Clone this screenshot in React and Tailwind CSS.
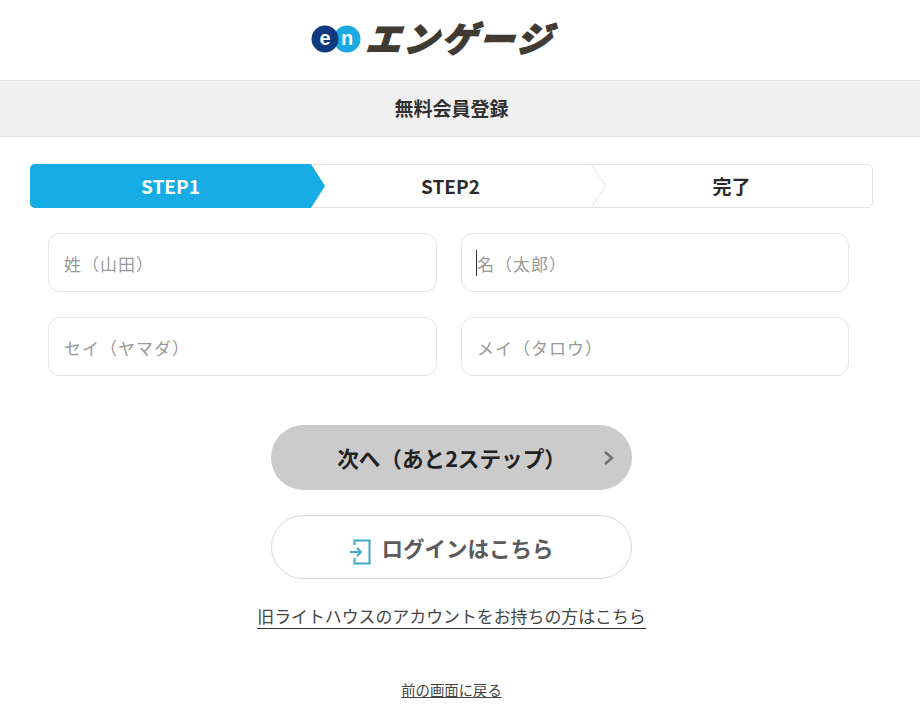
import React from "react";

const font = { jp: "font-['Noto_Sans_CJK_JP','Noto_Sans',sans-serif]" };

const Field = ({ placeholder, caret }) => (
  <div className="relative">
    <input
      type="text"
      placeholder={placeholder}
      className="w-full h-[59px] border border-[#e4e4e4] rounded-[12px] bg-white px-[15px] pt-[2px] text-[17px] tracking-[1px] text-[#333] placeholder:text-[#999] focus:outline-none"
    />
    {caret && <span className="absolute left-[15px] top-[17px] w-px h-[26px] bg-[#333]" />}
  </div>
);

const Logo = () => (
  <div className="flex items-center">
    <svg className="-mt-[2px]" width="50" height="28" viewBox="0 0 50 28">
      <circle cx="36" cy="14" r="13.5" fill="#1aa9e0" />
      <circle cx="14" cy="14" r="13.5" fill="#0f3a80" />
      <text x="14" y="20" textAnchor="middle" fontSize="20" fontWeight="700" fill="#fff" fontFamily="'Liberation Sans',sans-serif">e</text>
      <text x="36" y="20" textAnchor="middle" fontSize="20" fontWeight="700" fill="#fff" fontFamily="'Liberation Sans',sans-serif">n</text>
    </svg>
    <span className="ml-[9px] -mt-[7px] text-[35px] leading-none font-black text-[#3f3b33] tracking-[2.8px] -skew-x-[18deg] [-webkit-text-stroke:1.2px_#3f3b33] whitespace-nowrap">
      エンゲージ
    </span>
  </div>
);

const Steps = () => (
  <div className="relative mx-[30px] w-[843px] h-[44px] flex border border-[#e2e2e2] rounded-[5px] text-[19px] font-bold text-[#2b2b2b]">
    <div className="relative w-[281px] -m-px h-[44px] flex items-center justify-center bg-[#17ade4] rounded-l-[5px] text-white">
      STEP1
      <svg className="absolute left-full top-0" width="14" height="44" viewBox="0 0 14 44">
        <path d="M0 0 L14 22 L0 44 Z" fill="#17ade4" />
      </svg>
    </div>
    <div className="relative w-[281px] flex items-center justify-center">
      STEP2
      <svg className="absolute left-full -top-px" width="15" height="44" viewBox="0 0 15 44">
        <path d="M0 0 L15 22 L0 44" fill="#fff" stroke="#e2e2e2" />
      </svg>
    </div>
    <div className="w-[281px] flex items-center justify-center">完了</div>
  </div>
);

export default function App() {
  return (
    <div className={`w-[920px] min-h-[718px] bg-white ${font.jp}`}>
      <header className="h-[80px] flex items-center justify-center pr-[50px]">
        <Logo />
      </header>
      <div className="h-[57px] flex items-center justify-center pr-[17px] bg-[#f0f0f0] border-y border-[#e0e0e0] text-[19px] font-bold text-[#2f2f2f]">
        無料会員登録
      </div>

      <div className="pt-[27px]">
        <Steps />
      </div>

      <form className="mt-[25px] ml-[48px] grid grid-cols-[389px_388px] gap-x-[24px] gap-y-[25px]">
        <Field placeholder="姓（山田）" />
        <Field placeholder="名（太郎）" caret />
        <Field placeholder="セイ（ヤマダ）" />
        <Field placeholder="メイ（タロウ）" />
      </form>

      <div className="w-[903px] mt-[49px] flex flex-col items-center">
        <button
          type="button"
          className="relative w-[361px] h-[65px] rounded-full bg-[#cbcbcb] text-[21.6px] font-bold text-[#222] flex items-center justify-center pt-[1px]"
        >
          次へ（あと2ステップ）
          <svg className="absolute right-[17px] top-[25px]" width="12" height="16" viewBox="0 0 12 16" fill="none">
            <path d="M2 2 L9 8 L2 14" stroke="#6f6f6f" strokeWidth="2.4" />
          </svg>
        </button>

        <button
          type="button"
          className="mt-[25px] w-[361px] h-[64px] rounded-full bg-white border border-[#d8d8d8] text-[21.5px] font-bold text-[#5a5a5a] flex items-center justify-center pt-[2px]"
        >
          <svg className="mr-[10px] mt-[8px]" width="22" height="26" viewBox="0 0 22 26" fill="none" stroke="#3fa9d0" strokeWidth="2">
            <path d="M5.5 6 V1.5 H20.5 V24.5 H5.5 V19" />
            <path d="M1 13 H12 M8 9 L12 13 L8 17" />
          </svg>
          ログインはこちら
        </button>

        <a href="#" className="mt-[25px] pb-[1px] text-[16.9px] leading-[23px] text-[#444] border-b border-[#333] whitespace-nowrap">
          旧ライトハウスのアカウントをお持ちの方はこちら
        </a>

        <a href="#" className="mt-[51px] text-[14.4px] leading-[20px] text-[#444] underline">
          前の画面に戻る
        </a>
      </div>
    </div>
  );
}
